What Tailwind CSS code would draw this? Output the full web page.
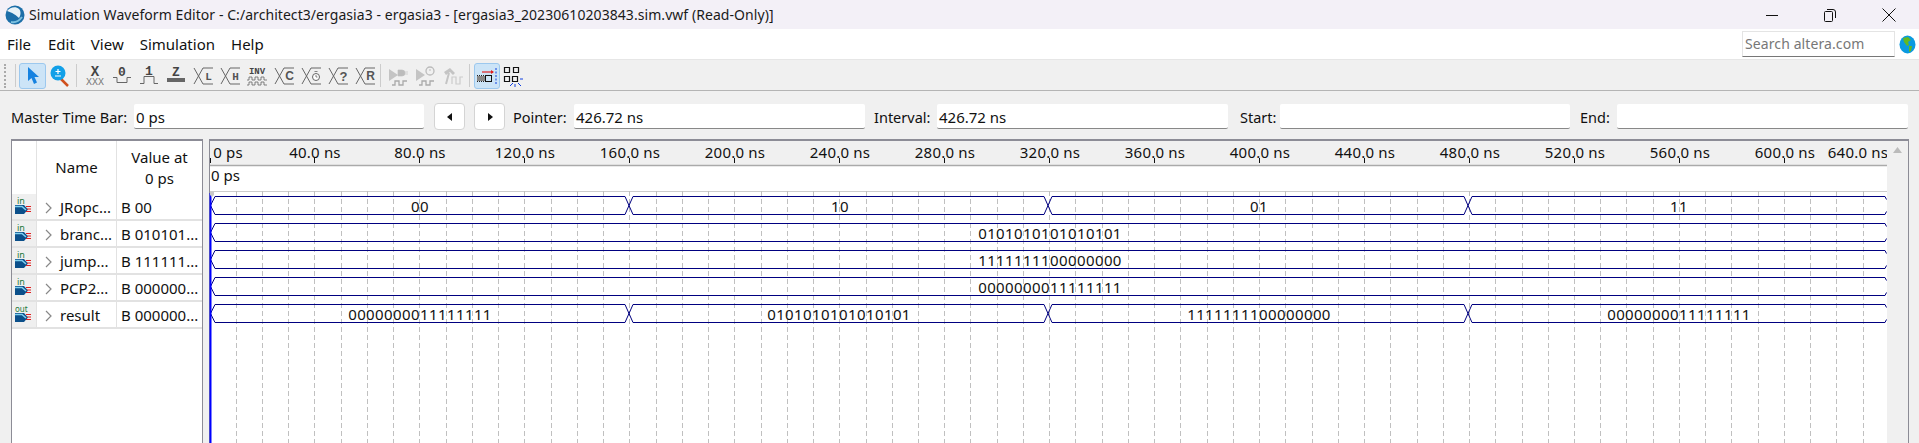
<!DOCTYPE html>
<html lang="en">
<head>
<meta charset="UTF-8">
<title>Simulation Waveform Editor</title>
<script src="https://cdn.jsdelivr.net/npm/@tailwindcss/browser@4"></script>
</head>
<body class="w-[1919px] h-[443px] overflow-hidden bg-[#f0f0f0] text-[#111] font-['Noto_Sans',sans-serif] text-[14px] leading-none">

<!-- shared icon parts -->
<svg width="0" height="0" class="absolute">
  <symbol id="bus" viewBox="0 0 26 24"><path d="M4 4l9 16M13 4L4 20M13 4h10M13 20h10" fill="none" stroke="#666" stroke-width="1"/></symbol>
  <symbol id="pin" viewBox="0 0 20 22">
    <path d="M0 9h9l4 4.500-4 4.500H0z" fill="#0b4f8a"/><path d="M0 10.500h7l4 3.500" fill="none" stroke="#7fd0f0" stroke-width="1.500"/>
    <path d="M11 10.500h5M12 13h4M11 15.500h5" stroke="#e02020" stroke-width="1"/>
  </symbol>
</svg>

<!-- title bar -->
<header class="h-[29px] bg-[#f3f0f7] flex items-center relative">
  <svg class="ml-[5px] w-[20px] h-[20px]" viewBox="0 0 20 20"><circle cx="10" cy="10" r="9.500" fill="#1c6ea8"/><path d="M2 6c3-4 9-5 12-2 2 2 2 6 0 9-3-3-6-5-12-7z" fill="#e8f2f8"/><path d="M6 17c4 1 8-1 11-5" stroke="#7cc0e0" stroke-width="2" fill="none"/></svg>
  <span class="ml-[4px] text-[#1a1a1a] text-[14px] tracking-[0.06px] leading-[20px] whitespace-nowrap">Simulation Waveform Editor - C:/architect3/ergasia3 - ergasia3 - [ergasia3_20230610203843.sim.vwf (Read-Only)]</span>
  <svg class="absolute left-[1764px] top-[8px] w-[16px] h-[12px]" viewBox="0 0 16 12"><path d="M2 7.500h12" stroke="#111" stroke-width="1"/></svg>
  <svg class="absolute left-[1822px] top-[7px] w-[16px] h-[16px]" viewBox="0 0 16 16"><path d="M2.500 5.500a1 1 0 0 1 1-1h6a1 1 0 0 1 1 1v8a1 1 0 0 1-1 1h-6a1 1 0 0 1-1-1zM5 2.500h6a2.500 2.500 0 0 1 2.500 2.500v6" fill="none" stroke="#111"/></svg>
  <svg class="absolute left-[1881px] top-[7px] w-[16px] h-[16px]" viewBox="0 0 16 16"><path d="M1.500 1.500l13 13M14.500 1.500l-13 13" fill="none" stroke="#111"/></svg>
</header>

<!-- menu bar -->
<nav class="h-[31px] bg-white flex items-center relative border-b border-[#e6e6e6] text-[15px]">
  <span class="ml-[7px]">File</span>
  <span class="ml-[17px]">Edit</span>
  <span class="ml-[16px]">View</span>
  <span class="ml-[16px]">Simulation</span>
  <span class="ml-[16px]">Help</span>
  <div class="ml-auto mr-[24px] w-[153px] h-[26px] bg-white border border-[#e4e4e4] border-b-[#777] flex items-center pl-[2px] text-[#777] text-[14px] tracking-[0.1px]">Search altera.com</div>
  <svg class="absolute left-[1899px] top-[6px] w-[17px] h-[19px]" viewBox="0 0 17 19"><ellipse cx="8.500" cy="9.500" rx="8" ry="9" fill="#0a9ae0"/><path d="M4 3l5-1 3 3-3 2 1 3-2 1-3-4zM10 11l3 0-1 5-2 1z" fill="#63b821"/></svg>
</nav>

<!-- toolbar -->
<div class="h-[30px] mt-[1px] border-b border-[#b4b4b4] flex items-center relative">
  <div class="ml-[4px] w-[3px] h-[24px] border-l-2 border-dotted border-[#aaa]"></div>
  <div class="ml-[8px] w-px h-[23px] bg-[#ccc]"></div>
  <div class="ml-[3px] w-[27px] h-[26px] bg-[#cce4f7] border border-[#9cc8ee] rounded-[3px] flex items-center justify-center">
    <svg class="w-[14px] h-[19px]" viewBox="0 0 14 19"><path d="M2 1v14l3.500-3 2.500 6 3-1.500-2.500-5.500H13z" fill="#1682e0"/></svg>
  </div>
  <svg class="ml-[4px] w-[20px] h-[24px]" viewBox="0 0 20 24"><path d="M11 15l7 7" stroke="#d0501c" stroke-width="2.500"/><circle cx="8" cy="9" r="7.500" fill="#12a0e8"/><path d="M8 5v5M5.500 7.500h5M5 12h6" stroke="#fff" stroke-width="1.200"/></svg>
  <div class="ml-[6px] w-px h-[23px] bg-[#ccc]"></div>

  <svg class="ml-[5px] w-[26px] h-[24px]" viewBox="0 0 26 24"><text x="13" y="12" text-anchor="middle" font-size="14" font-weight="700" fill="#444" font-family="Liberation Mono">X</text><text x="13" y="21" text-anchor="middle" font-size="10" fill="#777" font-family="Liberation Mono">XXX</text></svg>
  <svg class="ml-px w-[26px] h-[24px]" viewBox="0 0 26 24"><text x="13" y="12" text-anchor="middle" font-size="13" font-weight="700" fill="#444" font-family="Liberation Mono">0</text><path d="M4 13.500h4v5h10v-5h4" fill="none" stroke="#666"/></svg>
  <svg class="ml-px w-[26px] h-[24px]" viewBox="0 0 26 24"><text x="13" y="11" text-anchor="middle" font-size="13" font-weight="700" fill="#444" font-family="Liberation Mono">1</text><path d="M4 19.500h4v-7h10v7h4" fill="none" stroke="#666"/></svg>
  <svg class="ml-px w-[26px] h-[24px]" viewBox="0 0 26 24"><text x="13" y="12" text-anchor="middle" font-size="13" font-weight="700" fill="#444" font-family="Liberation Mono">Z</text><rect x="4" y="14" width="18" height="4" fill="#666"/></svg>
  <svg class="ml-px w-[26px] h-[24px]" viewBox="0 0 26 24"><use href="#bus"/><text x="18.500" y="16" text-anchor="middle" font-size="11" fill="#555" font-weight="700" font-family="Liberation Mono">L</text></svg>
  <svg class="ml-px w-[26px] h-[24px]" viewBox="0 0 26 24"><use href="#bus"/><text x="18.500" y="16" text-anchor="middle" font-size="11" fill="#555" font-weight="700" font-family="Liberation Mono">H</text></svg>
  <svg class="ml-px w-[26px] h-[24px]" viewBox="0 0 26 24"><text x="13" y="10" text-anchor="middle" font-size="9" font-weight="700" fill="#444" font-family="Liberation Mono">INV</text><path d="M3 16h2v-3h3v3h3v-3h3v3h3v-3h3v3h3M3 21h2v-3h3v3h3v-3h3v3h3v-3h3v3h3" fill="none" stroke="#666" stroke-width=".8"/></svg>
  <svg class="ml-px w-[26px] h-[24px]" viewBox="0 0 26 24"><use href="#bus"/><text x="18.500" y="16" text-anchor="middle" font-size="12" fill="#555" font-weight="700" font-family="Liberation Sans">C</text></svg>
  <svg class="ml-px w-[26px] h-[24px]" viewBox="0 0 26 24"><use href="#bus"/><circle cx="18" cy="13" r="3.500" fill="#fff" stroke="#666"/><path d="M18 11v2h1.500M16.500 7.500h3" fill="none" stroke="#666" stroke-width=".8"/></svg>
  <svg class="ml-px w-[26px] h-[24px]" viewBox="0 0 26 24"><use href="#bus"/><text x="18.500" y="17" text-anchor="middle" font-size="13" fill="#555" font-weight="700" font-family="Liberation Sans">?</text></svg>
  <svg class="ml-px w-[26px] h-[24px]" viewBox="0 0 26 24"><use href="#bus"/><text x="18.500" y="16" text-anchor="middle" font-size="12" fill="#555" font-weight="700" font-family="Liberation Sans">R</text></svg>
  <div class="ml-[2px] w-px h-[23px] bg-[#ccc]"></div>

  <svg class="ml-[5px] w-[26px] h-[24px]" viewBox="0 0 26 24"><path d="M3 5l9 6-9 6z" fill="#c4c4c4"/><path d="M12 6h4a3 3 0 0 1 0 6h-4zM19 8h3M19 10h3" fill="#bcbcbc" stroke="#bcbcbc" stroke-width=".6"/><path d="M6 21h3v-4h4v4h4v-4h4" fill="none" stroke="#aaa" stroke-width="1.300"/></svg>
  <svg class="ml-px w-[26px] h-[24px]" viewBox="0 0 26 24"><path d="M3 5l9 6-9 6z" fill="#c4c4c4"/><circle cx="17" cy="7" r="4" fill="none" stroke="#bbb" stroke-width="1.300"/><path d="M17 5v2" stroke="#bbb"/><path d="M6 21h3v-4h4v4h4v-4h4" fill="none" stroke="#aaa" stroke-width="1.300"/></svg>
  <svg class="ml-px w-[26px] h-[24px]" viewBox="0 0 26 24"><path d="M4 8l6-4 5 5-2 2-3-3-4 3z" fill="#c4c4c4"/><path d="M9 9l-3 11" stroke="#c4c4c4" stroke-width="2"/><path d="M12 20v-7h4v7h4v-7h3" fill="none" stroke="#ccc" stroke-width="1.200"/></svg>
  <div class="ml-[3px] w-px h-[23px] bg-[#ccc]"></div>

  <div class="ml-[4px] w-[26px] h-[26px] bg-[#cce4f7] border border-[#9cc8ee] rounded-[3px] flex items-center justify-center">
    <svg class="w-[22px] h-[18px]" viewBox="0 0 22 18"><path d="M6 5h11" stroke="#e02020" stroke-width="1.200"/><path d="M15 3l3 2-3 2z" fill="#e02020"/><rect x="1" y="9" width="8" height="5" fill="#888"/><rect x="9.500" y="8.500" width="6" height="6" fill="none" stroke="#111"/><path d="M1 8.500h8M1 14.500h8" stroke="#222" stroke-dasharray="1 1"/><path d="M20 1v16" stroke="#1040e0" stroke-dasharray="2 1.500"/></svg>
  </div>
  <svg class="ml-[2px] w-[22px] h-[22px]" viewBox="0 0 22 22"><path d="M2.500 2.500h5v5h-5zM11.500 2.500h5v5h-5zM2.500 11.500h5v5h-5zM10.500 11.500h5v5h-5z" fill="none" stroke="#111" stroke-width="1.200"/><path d="M18 14h3M16 18l3 3M11 18l-3 3M13 19v3" stroke="#1040e0"/></svg>
</div>

<!-- time bar row -->
<div class="h-[48px] pt-[13px] flex items-start text-[14.500px]">
  <label class="ml-[11px] w-[123px] h-[25px] pt-[2px] flex items-center">Master Time Bar:</label>
  <div class="w-[290px] h-[25px] pt-[2px] text-[15px] bg-white border-b border-[#888] rounded-[2px] flex items-center pl-[2px]">0 ps</div>
  <button class="ml-[10px] w-[31px] h-[27px] -mt-[1px] bg-white border border-[#d4d4d4] rounded-[4px] flex items-center justify-center"><svg class="w-[6px] h-[8px]" viewBox="0 0 6 8"><path d="M5 0v8L0 4z" fill="#111"/></svg></button>
  <button class="ml-[9px] w-[31px] h-[27px] -mt-[1px] bg-white border border-[#d4d4d4] rounded-[4px] flex items-center justify-center"><svg class="w-[6px] h-[8px]" viewBox="0 0 6 8"><path d="M1 0v8l5-4z" fill="#111"/></svg></button>
  <label class="ml-[8px] w-[61px] h-[25px] pt-[2px] flex items-center">Pointer:</label>
  <div class="w-[291px] h-[25px] pt-[2px] text-[15px] bg-white border-b border-[#888] rounded-[2px] flex items-center pl-[2px]">426.72 ns</div>
  <label class="ml-[9px] w-[63px] h-[25px] pt-[2px] flex items-center">Interval:</label>
  <div class="w-[291px] h-[25px] pt-[2px] text-[15px] bg-white border-b border-[#888] rounded-[2px] flex items-center pl-[2px]">426.72 ns</div>
  <label class="ml-[12px] w-[40px] h-[25px] pt-[2px] flex items-center">Start:</label>
  <div class="w-[290px] h-[25px] bg-white border-b border-[#888] rounded-[2px]"></div>
  <label class="ml-[10px] w-[37px] h-[25px] pt-[2px] flex items-center">End:</label>
  <div class="w-[291px] h-[25px] bg-white border-b border-[#888] rounded-[2px]"></div>
</div>

<!-- panels -->
<main class="flex items-start text-[15px]">
  <!-- signal table -->
  <section class="ml-[11px] w-[192px] h-[304px] bg-white border-x border-t-2 border-[#8c8c96] flex flex-col">
    <div class="h-[53px] grid grid-cols-[25px_80px_1fr] shrink-0">
      <div class="border-r border-[#e2e2e2]"></div>
      <div class="border-r border-[#e2e2e2] flex items-center justify-center pb-[1px]">Name</div>
      <div class="flex flex-col items-center gap-[6px] pt-[9px]"><span>Value at</span><span>0 ps</span></div>
    </div>
    <div class="grid grid-cols-[25px_80px_1fr] h-[27px] border-b-2 border-[#e2e2e2]">
      <div class="bg-[#efefef] border-r border-[#e2e2e2]"><svg class="w-[20px] h-[24px] ml-[3px]" viewBox="0 -2 20 24"><use href="#pin" width="20" height="22"/><text x="2" y="8" font-size="9" fill="#1f7a3a">in</text></svg></div>
      <div class="border-r border-[#e2e2e2] flex items-center pt-[2px]"><svg class="ml-[8px] w-[8px] h-[12px]" viewBox="0 0 8 12"><path d="M1 1l5 5-5 5" fill="none" stroke="#888" stroke-width="1.200"/></svg><span class="ml-[7px]">JRopc...</span></div>
      <div class="flex items-center pl-[4px] pt-[2px]">B 00</div>
    </div>
    <div class="grid grid-cols-[25px_80px_1fr] h-[27px] border-b-2 border-[#e2e2e2]">
      <div class="bg-[#efefef] border-r border-[#e2e2e2]"><svg class="w-[20px] h-[24px] ml-[3px]" viewBox="0 -2 20 24"><use href="#pin" width="20" height="22"/><text x="2" y="8" font-size="9" fill="#1f7a3a">in</text></svg></div>
      <div class="border-r border-[#e2e2e2] flex items-center pt-[2px]"><svg class="ml-[8px] w-[8px] h-[12px]" viewBox="0 0 8 12"><path d="M1 1l5 5-5 5" fill="none" stroke="#888" stroke-width="1.200"/></svg><span class="ml-[7px]">branc...</span></div>
      <div class="flex items-center pl-[4px] pt-[2px]">B 010101...</div>
    </div>
    <div class="grid grid-cols-[25px_80px_1fr] h-[27px] border-b-2 border-[#e2e2e2]">
      <div class="bg-[#efefef] border-r border-[#e2e2e2]"><svg class="w-[20px] h-[24px] ml-[3px]" viewBox="0 -2 20 24"><use href="#pin" width="20" height="22"/><text x="2" y="8" font-size="9" fill="#1f7a3a">in</text></svg></div>
      <div class="border-r border-[#e2e2e2] flex items-center pt-[2px]"><svg class="ml-[8px] w-[8px] h-[12px]" viewBox="0 0 8 12"><path d="M1 1l5 5-5 5" fill="none" stroke="#888" stroke-width="1.200"/></svg><span class="ml-[7px]">jump...</span></div>
      <div class="flex items-center pl-[4px] pt-[2px]">B 111111...</div>
    </div>
    <div class="grid grid-cols-[25px_80px_1fr] h-[27px] border-b-2 border-[#e2e2e2]">
      <div class="bg-[#efefef] border-r border-[#e2e2e2]"><svg class="w-[20px] h-[24px] ml-[3px]" viewBox="0 -2 20 24"><use href="#pin" width="20" height="22"/><text x="2" y="8" font-size="9" fill="#1f7a3a">in</text></svg></div>
      <div class="border-r border-[#e2e2e2] flex items-center pt-[2px]"><svg class="ml-[8px] w-[8px] h-[12px]" viewBox="0 0 8 12"><path d="M1 1l5 5-5 5" fill="none" stroke="#888" stroke-width="1.200"/></svg><span class="ml-[7px]">PCP2...</span></div>
      <div class="flex items-center pl-[4px] pt-[2px]">B 000000...</div>
    </div>
    <div class="grid grid-cols-[25px_80px_1fr] h-[27px] border-b-2 border-[#e2e2e2]">
      <div class="bg-[#efefef] border-r border-[#e2e2e2]"><svg class="w-[20px] h-[24px] ml-[3px]" viewBox="0 -2 20 24"><use href="#pin" width="20" height="22"/><text x="0" y="8" font-size="8" fill="#1f7a3a">out</text></svg></div>
      <div class="border-r border-[#e2e2e2] flex items-center pt-[2px]"><svg class="ml-[8px] w-[8px] h-[12px]" viewBox="0 0 8 12"><path d="M1 1l5 5-5 5" fill="none" stroke="#888" stroke-width="1.200"/></svg><span class="ml-[7px]">result</span></div>
      <div class="flex items-center pl-[4px] pt-[2px]">B 000000...</div>
    </div>
  </section>

  <!-- waveform panel: viewBox coordinates are window pixels -->
  <section class="ml-[6px] w-[1700px] h-[304px]">
    <svg width="1700" height="304" viewBox="209 139 1700 304" font-size="15" fill="#111">
      <defs><clipPath id="waves"><rect x="209" y="139" width="1678" height="304"/></clipPath></defs>
      <rect x="209" y="139" width="1700" height="304" fill="#fff"/>
      <!-- ruler -->
      <rect x="210" y="141" width="1677" height="24" fill="#f0f0f0"/>
      <path d="M209 140h1699" stroke="#8c8c96" stroke-width="2"/>
      <path d="M210 165.500h1677" stroke="#aaa" stroke-width="1.500"/>
      <path d="M210 191.500h1677" stroke="#ccc"/>
      <path d="M209.500 139v304" stroke="#8c8c96"/>
      <!-- grid -->
      <path id="grid" d="" stroke="#c0c0c0" stroke-dasharray="5 3" fill="none"/>
      <path d="M210.500 158v5M314.500 158v5M419.500 158v5M524.500 158v5M629.500 158v5M734.500 158v5M839.500 158v5M944.500 158v5M1049.500 158v5M1154.500 158v5M1259.500 158v5M1364.500 158v5M1469.500 158v5M1574.500 158v5M1679.500 158v5M1784.500 158v5" stroke="#111"/>
      <g class="tracking-[0.2px]" text-anchor="middle">
        <text x="228" y="158">0 ps</text>
        <text x="315" y="158">40.0 ns</text>
        <text x="420" y="158">80.0 ns</text>
        <text x="525" y="158">120.0 ns</text>
        <text x="630" y="158">160.0 ns</text>
        <text x="735" y="158">200.0 ns</text>
        <text x="840" y="158">240.0 ns</text>
        <text x="945" y="158">280.0 ns</text>
        <text x="1050" y="158">320.0 ns</text>
        <text x="1155" y="158">360.0 ns</text>
        <text x="1260" y="158">400.0 ns</text>
        <text x="1365" y="158">440.0 ns</text>
        <text x="1470" y="158">480.0 ns</text>
        <text x="1575" y="158">520.0 ns</text>
        <text x="1680" y="158">560.0 ns</text>
        <text x="1785" y="158">600.0 ns</text>
        <text x="1858" y="158">640.0 ns</text>
      </g>
      <text x="211" y="181">0 ps</text>
      <!-- buses -->
      <g fill="none" stroke="#000080" clip-path="url(#waves)">
        <path id="toggle" d="M215 196.500L210.500 205.500L215 214.500H625L633 196.500H1044L1052 214.500H1464L1472 196.500H1885l1.500 3M215 196.500H625L633 214.500H1044L1052 196.500H1464L1472 214.500H1885l1.500-3"/>
        <path id="steady" transform="translate(0 27)" d="M215 196.500L210.500 205.500L215 214.500H1885l1.500-3M215 196.500H1885l1.500 3"/>
        <use href="#steady" transform="translate(0 27)"/>
        <use href="#steady" transform="translate(0 54)"/>
        <use href="#toggle" transform="translate(0 108)"/>
      </g>
      <path d="M210.500 193v250" stroke="#0000ff" stroke-width="2"/>
      <path d="M210 192h4v3l-2 2-2-2z" fill="#c8c8c8"/>
      <g class="tracking-[0.4px]" text-anchor="middle" clip-path="url(#waves)">
        <text x="420" y="212">00</text><text x="840" y="212">10</text><text x="1259" y="212">01</text><text x="1679" y="212">11</text>
        <text x="1050" y="239">0101010101010101</text>
        <text x="1050" y="266">1111111100000000</text>
        <text x="1050" y="293">0000000011111111</text>
        <text x="420" y="320">0000000011111111</text><text x="839" y="320">0101010101010101</text><text x="1259" y="320">1111111100000000</text><text x="1679" y="320">0000000011111111</text>
      </g>
      <!-- scrollbar -->
      <rect x="1887" y="141" width="21" height="302" fill="#f0f0f0"/>
      <path d="M1893 153l4.500-6 4.500 6z" fill="#bbb"/>
      <path d="M1908.500 139v304" stroke="#8c8c96"/>
      <rect x="1909" y="139" width="10" height="304" fill="#f0f0f0"/>
    </svg>
  </section>
</main>

<script>
  // dashed time grid, one line every 10 ns
  let d = '';
  for (let k = 1; k <= 64; k++) d += `M${Math.round(209.5 + 26.24 * k) + 0.5} 191V443`;
  document.getElementById('grid').setAttribute('d', d);
</script>
</body>
</html>
